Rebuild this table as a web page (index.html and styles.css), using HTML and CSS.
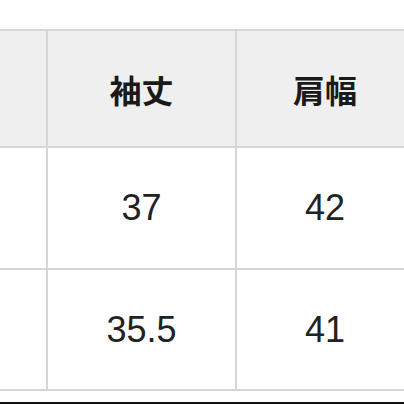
FILE: index.html
```html
<!DOCTYPE html>
<html lang="ja">
<head>
<meta charset="utf-8">
<link rel="stylesheet" href="styles.css">
</head>
<body>
<div class="page">
  <div class="size-table">
    <div class="cell head"></div>
    <div class="cell head">袖丈</div>
    <div class="cell head">肩幅</div>
    <div class="cell num"></div>
    <div class="cell num">37</div>
    <div class="cell num">42</div>
    <div class="cell num"></div>
    <div class="cell num">35.5</div>
    <div class="cell num">41</div>
  </div>
  <div class="bottom-bar"></div>
</div>
</body>
</html>
```

FILE: styles.css
```css
html, body {
  margin: 0;
  padding: 0;
  background: #ffffff;
  overflow: hidden;
  width: 404px;
  height: 404px;
}
.page {
  padding-top: 29px;
  width: 404px;
  height: 404px;
  overflow: hidden;
  box-sizing: border-box;
}
.size-table {
  display: grid;
  grid-template-columns: 46px 187px 176px;
  grid-template-rows: 115px 120px 119px;
  gap: 2px;
  padding: 2px 0;
  background: #d6d6d6;
  width: 413px;
}
.cell {
  display: flex;
  align-items: center;
  justify-content: center;
  background: #ffffff;
}
.cell.head {
  background: #efefef;
  font-family: "Noto Sans CJK JP", "Noto Sans", sans-serif;
  font-weight: 700;
  font-size: 32px;
  color: #1a1a1a;
}
.cell.num {
  font-family: "Liberation Sans", Arial, sans-serif;
  font-size: 36px;
  color: #222222;
}
.bottom-bar {
  margin-top: 11px;
  height: 3px;
  background: #111111;
}
```
